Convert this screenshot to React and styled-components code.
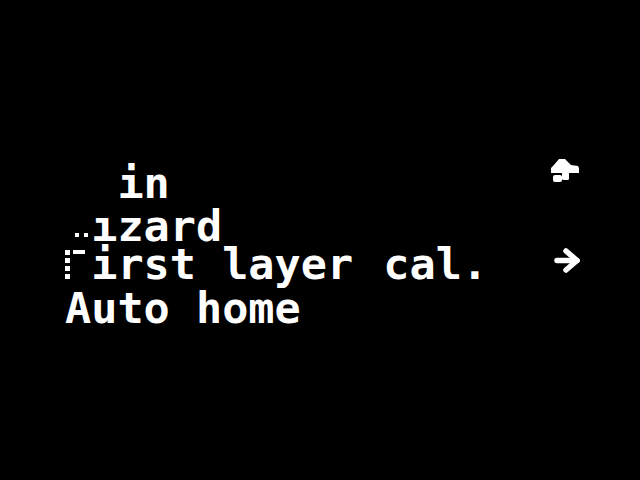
import React from "react";
import styled, { createGlobalStyle } from "styled-components";

const Global = createGlobalStyle`
  html, body { margin: 0; padding: 0; background: #000; }
  body { width: 640px; height: 480px; overflow: hidden; }
`;

const Screen = styled.div`
  width: 640px;
  height: 480px;
  background: #000;
  box-sizing: border-box;
  padding: 164px 0 0 65px;
  display: flex;
  flex-direction: column;
  font-family: "DejaVu Sans Mono", "Liberation Mono", monospace;
  font-weight: bold;
  font-size: 43.5px;
  color: #fff;
`;

const Row = styled.div`
  width: 517px;
  height: ${(p) => p.$h}px;
  line-height: 38px;
  display: flex;
  align-items: flex-start;
  white-space: pre;
`;

const Text = styled.span`
  flex: 1;
  display: flex;
  white-space: pre;
`;

const Ghost = styled.span`
  color: transparent;
`;

const Chunk = styled.span`
  margin-left: ${(p) => p.$ml || 0}px;
`;

const BrokenW = styled.span`
  position: relative;
  color: transparent;
  &::before,
  &::after {
    content: "";
    position: absolute;
    top: 26px;
    width: 4px;
    height: 4px;
    background: #fff;
  }
  &::before { left: 10px; }
  &::after { left: 19px; }
`;

const BrokenF = styled.span`
  position: relative;
  color: transparent;
  &::before {
    content: "";
    position: absolute;
    left: 0;
    top: 5px;
    width: 5px;
    height: 30px;
    background: repeating-linear-gradient(
      to bottom,
      #fff 0 5px,
      transparent 5px 8px
    );
  }
  &::after {
    content: "";
    position: absolute;
    left: 8px;
    top: 5px;
    width: 12px;
    height: 4px;
    background: #fff;
  }
`;

const IconCell = styled.div`
  width: 32px;
  height: 26px;
  margin-top: ${(p) => p.$dy}px;
  flex: none;
  svg { display: block; }
`;

const UpLevelIcon = () => (
  <svg width="32" height="26" viewBox="0 0 32 26">
    <g fill="#fff">
      <path d="M9 0 L15 0 L21 6 L28 7 L29 9 L29 14 L1 14 L1 9 L3 7 Z" />
      <rect x="12" y="11" width="7" height="10" rx="1.5" />
      <rect x="3" y="16" width="9" height="7" rx="2" />
    </g>
  </svg>
);

const RightArrowIcon = () => (
  <svg width="32" height="26" viewBox="0 0 32 26">
    <g stroke="#fff" strokeWidth="5.5" strokeLinecap="round" strokeLinejoin="round" fill="none">
      <line x1="7" y1="12.5" x2="27" y2="12.5" />
      <polyline points="16,3 27,12.5 16,22" />
    </g>
  </svg>
);

export default function App() {
  return (
    <>
      <Global />
      <Screen>
        <Row $h={43}>
          <Text>
            <Ghost>Ma</Ghost>
            <Chunk>in</Chunk>
          </Text>
          <IconCell $dy={-5}>
            <UpLevelIcon />
          </IconCell>
        </Row>
        <Row $h={38}>
          <Text>
            <BrokenW>W</BrokenW>
            <Chunk>ızard</Chunk>
          </Text>
        </Row>
        <Row $h={44}>
          <Text>
            <BrokenF>F</BrokenF>
            <Chunk>irst layer </Chunk>
            <Chunk $ml={4}>cal.</Chunk>
          </Text>
          <IconCell $dy={3}>
            <RightArrowIcon />
          </IconCell>
        </Row>
        <Row $h={38}>
          <Text>
            <Chunk>Auto home</Chunk>
          </Text>
        </Row>
      </Screen>
    </>
  );
}
